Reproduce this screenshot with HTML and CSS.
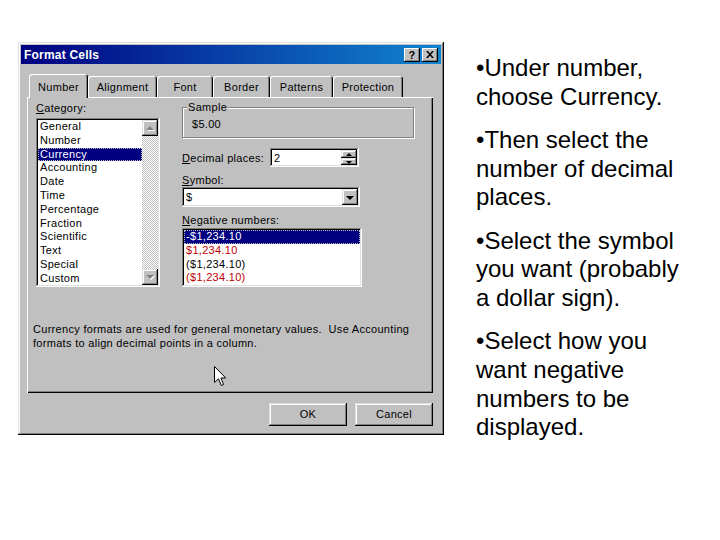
FILE: index.html
```html
<!DOCTYPE html>
<html lang="en">
<head>
  <meta charset="UTF-8">
  <title>Format Cells - Currency</title>
  <link rel="stylesheet" href="styles.css">
</head>
<body>
  <div class="slide">
    <!-- dialog -->
    <div class="dialog">
      <div class="titlebar">
        <span class="title">Format Cells</span>
        <div class="title-btns">
          <span class="tbtn">?</span>
          <span class="tbtn">
            <svg width="8" height="7" viewBox="0 0 8 7"><path d="M0 0h2l2 2.5 2-2.5h2l-3 3.5 3 3.5h-2l-2-2.5-2 2.5h-2l3-3.5z" fill="#000"/></svg>
          </span>
        </div>
      </div>

      <div class="tabs">
        <span class="tab active t-number">Number</span>
        <span class="tab t-align">Alignment</span>
        <span class="tab t-font">Font</span>
        <span class="tab t-border">Border</span>
        <span class="tab t-patterns">Patterns</span>
        <span class="tab t-protect">Protection</span>
      </div>

      <div class="panel">
        <div class="cols">
          <!-- category -->
          <div class="col-left">
            <div class="label"><u>C</u>ategory:</div>
            <div class="listbox">
              <ul class="items">
                <li>General</li>
                <li>Number</li>
                <li class="sel">Currency</li>
                <li>Accounting</li>
                <li>Date</li>
                <li>Time</li>
                <li>Percentage</li>
                <li>Fraction</li>
                <li>Scientific</li>
                <li>Text</li>
                <li>Special</li>
                <li>Custom</li>
              </ul>
              <div class="scroll">
                <span class="sbtn up"></span>
                <span class="sbtn down"></span>
              </div>
            </div>
          </div>

          <!-- options -->
          <div class="col-right">
            <div class="sample">
              <span class="sample-label">Sample</span>
              <div class="sample-value">$5.00</div>
            </div>

            <div class="decimal-row">
              <span class="label dec-label"><u>D</u>ecimal places:</span>
              <div class="spin-input">
                <span class="field-text">2</span>
                <div class="spinner">
                  <span class="spin up"></span>
                  <span class="spin down"></span>
                </div>
              </div>
            </div>

            <div class="label gap-label"><u>S</u>ymbol:</div>
            <div class="select">
              <span class="field-text">$</span>
              <span class="drop-btn"></span>
            </div>

            <div class="label gap-label"><u>N</u>egative numbers:</div>
            <ul class="items neglist">
              <li class="sel">-$1,234.10</li>
              <li class="red">$1,234.10</li>
              <li>($1,234.10)</li>
              <li class="red">($1,234.10)</li>
            </ul>
          </div>
        </div>

        <p class="desc">Currency formats are used for general monetary values.&nbsp; Use Accounting<br>formats to align decimal points in a column.</p>

        <!-- mouse pointer -->
        <svg class="cursor" width="13" height="21" viewBox="0 0 13 21">
          <path d="M0.5 0.5V16.5L4.5 12.8L7.3 19.5L9.6 18.5L6.9 12H11.8Z" fill="#fff" stroke="#000" stroke-width="1"/>
        </svg>
      </div>

      <div class="actions">
        <span class="btn">OK</span>
        <span class="btn">Cancel</span>
      </div>
    </div>

    <!-- notes -->
    <div class="notes">
      <p>•Under number,<br>choose Currency.</p>
      <p>•Then select the<br>number of decimal<br>places.</p>
      <p>•Select the symbol<br>you want (probably<br>a dollar sign).</p>
      <p>•Select how you<br>want negative<br>numbers to be<br>displayed.</p>
    </div>
  </div>
</body>
</html>
```

FILE: styles.css
```css
/* reset */
body {
  margin: 0;
  background: #fff;
  font-family: "Liberation Sans", Arial, sans-serif;
}

.slide {
  display: flex;
  width: 720px;
  height: 540px;
}

/* === dialog === */
.dialog {
  margin: 42px 0 0 18px;
  width: 426px;
  height: 393px;
  box-sizing: border-box;
  padding: 3px;
  background: #c0c0c0;
  box-shadow: inset -1px -1px #000, inset 1px 1px #dfdfdf, inset -2px -2px #808080, inset 2px 2px #fff;
  font-size: 11px;
  letter-spacing: 0.3px;
  color: #000;
  display: flex;
  flex-direction: column;
}

.titlebar {
  height: 19px;
  display: flex;
  align-items: center;
  justify-content: space-between;
  padding: 0 3px;
  background: linear-gradient(90deg, #000080, #1084d0);
}
.title {
  color: #fff;
  font-weight: bold;
  font-size: 12px;
  letter-spacing: 0.2px;
}
.title-btns {
  display: flex;
  gap: 2px;
}
.tbtn {
  width: 16px;
  height: 14px;
  display: flex;
  align-items: center;
  justify-content: center;
  background: #c0c0c0;
  font-weight: bold;
  font-size: 11px;
  box-shadow: inset -1px -1px #000, inset 1px 1px #fff, inset -2px -2px #808080;
}

/* === tabs === */
.tabs {
  display: flex;
  align-items: flex-end;
  height: 23px;
  margin: 10px 0 0 8px;
}
.tab {
  height: 21px;
  box-sizing: border-box;
  display: flex;
  align-items: center;
  justify-content: center;
  padding-top: 1px;
  border-radius: 3px 3px 0 0;
  box-shadow: inset 1px 1px #fff, inset -1px 0 #000, inset -2px 0 #808080;
}
.tab.active {
  height: 24px;
  margin-bottom: -1px;
  position: relative;
  z-index: 1;
  background: #c0c0c0;
}
.t-number { width: 59px; }
.t-align { width: 69px; }
.t-font { width: 56px; }
.t-border { width: 57px; }
.t-patterns { width: 63px; }
.t-protect { width: 70px; }

.panel {
  position: relative;
  margin-left: 6px;
  width: 406px;
  height: 296px;
  box-sizing: border-box;
  padding: 4px 0 0 9px;
  box-shadow: inset 1px 1px #fff, inset -1px -1px #000, inset -2px -2px #808080;
}

.cols {
  display: flex;
  gap: 22px;
}
.col-left { width: 124px; }
.col-right { width: 232px; }

.label {
  line-height: 14px;
  height: 14px;
  white-space: nowrap;
}

/* sunken fields */
.listbox,
.spin-input,
.select,
.neglist {
  box-sizing: border-box;
  background: #fff;
  box-shadow: inset -1px -1px #fff, inset 1px 1px #808080, inset -2px -2px #dfdfdf, inset 2px 2px #000;
}

.listbox {
  margin-top: 3px;
  height: 169px;
  padding: 2px;
  display: flex;
}
.items {
  flex: 1;
  list-style: none;
  margin: 0;
  padding: 0;
}
.items li {
  height: 13.8px;
  line-height: 13.8px;
  padding-left: 2px;
  white-space: nowrap;
}
.items li.sel {
  background: #000080;
  color: #fff;
  outline: 1px dotted #c0c0c0;
  outline-offset: -1px;
}
.items li.red { color: #c00000; }

.scroll {
  width: 16px;
  display: flex;
  flex-direction: column;
  justify-content: space-between;
  background: repeating-conic-gradient(#fff 0 25%, #c0c0c0 0 50%) 0 0 / 2px 2px;
}

/* raised buttons */
.sbtn,
.spin,
.drop-btn,
.btn {
  position: relative;
  display: block;
  background: #c0c0c0;
  box-shadow: inset -1px -1px #000, inset 1px 1px #dfdfdf, inset -2px -2px #808080, inset 2px 2px #fff;
}
.sbtn {
  width: 16px;
  height: 16px;
}
.sbtn::after,
.spin::after,
.drop-btn::after {
  content: "";
  position: absolute;
  left: 50%;
  top: 50%;
  width: 0;
  height: 0;
  border-left: 3px solid transparent;
  border-right: 3px solid transparent;
}
.sbtn::after {
  margin: -2px 0 0 -4px;
  border-left-width: 4px;
  border-right-width: 4px;
}
.sbtn.up::after { border-bottom: 4px solid #808080; filter: drop-shadow(1px 1px 0 #fff); }
.sbtn.down::after { border-top: 4px solid #808080; filter: drop-shadow(1px 1px 0 #fff); }

/* sample group */
.sample {
  margin-top: 6px;
  height: 31px;
  box-sizing: border-box;
  border: 1px solid #808080;
  box-shadow: inset 1px 1px #fff, 1px 1px #fff;
}
.sample-label {
  display: block;
  width: fit-content;
  margin: -8px 0 0 4px;
  padding: 0 1px;
  line-height: 14px;
  background: #c0c0c0;
}
.sample-value {
  margin: 3px 0 0 9px;
  line-height: 14px;
}

.decimal-row {
  display: flex;
  align-items: center;
  margin-top: 10px;
}
.dec-label { width: 88px; }
.spin-input {
  width: 89px;
  height: 19px;
  padding: 2px;
  display: flex;
  align-items: center;
}
.field-text {
  flex: 1;
  padding-left: 2px;
  line-height: 14px;
}
.spinner {
  width: 16px;
  height: 15px;
  display: flex;
  flex-direction: column;
}
.spin { height: 8px; }
.spin + .spin { height: 7px; }
.spin::after { margin: -1px 0 0 -3px; }
.spin.up::after { border-bottom: 3px solid #000; }
.spin.down::after { border-top: 3px solid #000; }

.gap-label { margin-top: 6px; }

.select {
  width: 178px;
  height: 20px;
  padding: 2px;
  display: flex;
  align-items: center;
}
.drop-btn {
  width: 16px;
  height: 16px;
}
.drop-btn::after {
  margin: -1px 0 0 -4px;
  border-left-width: 4px;
  border-right-width: 4px;
  border-top: 4px solid #000;
}

.neglist {
  flex: none;
  margin-top: 1px;
  width: 180px;
  height: 59px;
  padding: 2px;
  overflow: hidden;
}

.desc {
  margin: 35px 0 0 -3px;
  line-height: 14px;
}

.cursor {
  position: absolute;
  left: 187px;
  top: 269px;
}

/* === OK / Cancel === */
.actions {
  display: flex;
  justify-content: flex-end;
  gap: 8px;
  width: 406px;
  margin: 10px 0 0 6px;
}
.btn {
  width: 78px;
  height: 23px;
  line-height: 23px;
  text-align: center;
}

/* === notes === */
.notes {
  margin: 54px 0 0 32px;
  font-size: 24px;
  line-height: 28.7px;
  color: #000;
}
.notes p {
  margin: 0 0 14.5px;
  white-space: nowrap;
}
```
